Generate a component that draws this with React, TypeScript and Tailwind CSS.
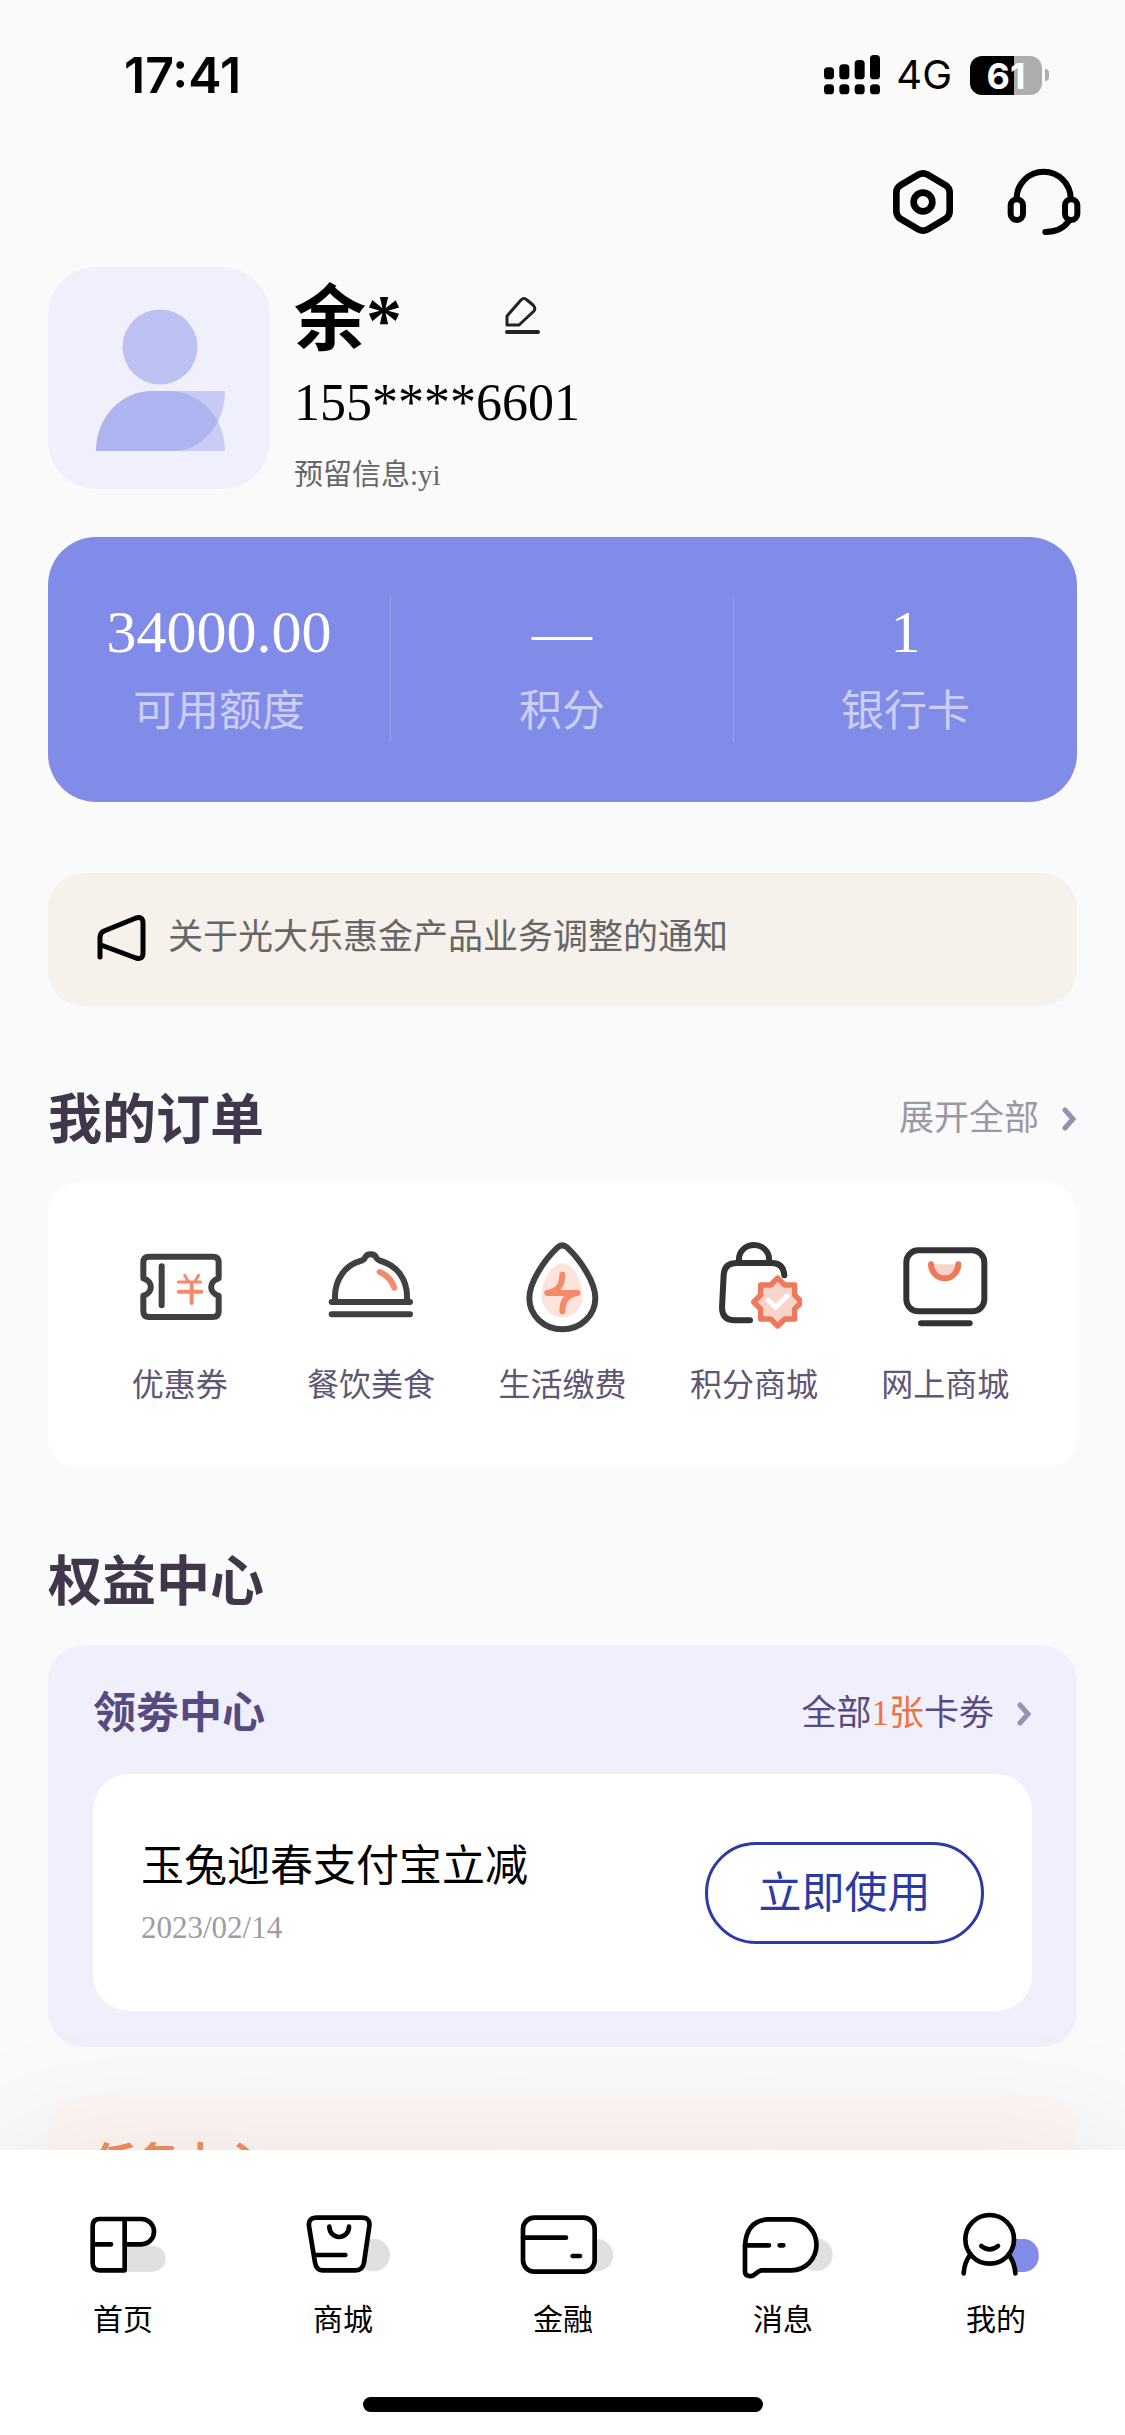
import type { ReactNode } from "react";

const INK = "#404040";
const CORAL = "#f58a6b";

const SignalIcon = () => (
	<svg className="w-14 h-10" viewBox="0 0 168 120" fill="#000">
		<rect x="0" y="37" width="30" height="36" rx="11" />
		<rect x="46" y="28" width="30" height="45" rx="11" />
		<rect x="92" y="15" width="30" height="58" rx="11" />
		<rect x="138" y="0" width="30" height="73" rx="11" />
		<rect x="0" y="88" width="30" height="30" rx="11" />
		<rect x="46" y="88" width="30" height="30" rx="11" />
		<rect x="92" y="88" width="30" height="30" rx="11" />
		<rect x="138" y="88" width="30" height="30" rx="11" />
	</svg>
);

const SettingsIcon = () => (
	<svg className="w-16 h-[68px]" viewBox="0 0 192 204" fill="none" stroke="#000" strokeWidth="20">
		<path d="M82 20Q96 12 110 20L163 51Q176 59 176 74V130Q176 145 163 153L110 184Q96 192 82 184L29 153Q16 145 16 130V74Q16 59 29 51Z" />
		<circle cx="96" cy="102" r="28" />
	</svg>
);

const HeadsetIcon = () => (
	<svg
		className="w-[76px] h-[68px]"
		viewBox="0 0 228 204"
		fill="none"
		stroke="#000"
		strokeWidth="18"
		strokeLinecap="round"
	>
		<rect x="14" y="94" width="37" height="62" rx="18" />
		<rect x="177" y="94" width="37" height="62" rx="18" />
		<path d="M32 92A81 81 0 0 1 194 92" />
		<path d="M188 160Q165 192 118 192" />
	</svg>
);

const EditIcon = () => (
	<svg
		className="w-[38px] h-10"
		viewBox="0 0 38 40"
		fill="none"
		stroke="#222"
		strokeWidth="3"
		strokeLinecap="round"
		strokeLinejoin="round"
	>
		<path d="M3 29V20L17 4Q20 1 23 4L29 9Q32 12 30 15L15 29Z" />
		<path d="M3 36H34" strokeWidth="4" />
	</svg>
);

const AvatarIcon = () => (
	<svg className="w-[222px] h-[222px] rounded-[48px] bg-[#f0f0fc]" viewBox="0 0 222 222">
		<circle cx="112" cy="80" r="37.500" fill="#bcc1f1" />
		<path d="M48 184A56 60 0 0 1 104 124H121A56 60 0 0 1 177 184Z" fill="#818be8" fillOpacity="0.35" />
		<path
			d="M48 184A56 60 0 0 1 104 124H177A52 60 0 0 1 125 184Z"
			fill="#818be8"
			fillOpacity="0.38"
		/>
	</svg>
);

const HornIcon = () => (
	<svg
		className="w-[52px] h-12"
		viewBox="0 0 52 48"
		fill="none"
		stroke="#000"
		strokeWidth="5"
		strokeLinecap="round"
		strokeLinejoin="round"
	>
		<path d="M4 43V23Q4 19 8 17L40 4Q47 2 47 9V39Q47 46 40 44L5 31" />
	</svg>
);

const Chevron = () => (
	<svg
		className="w-4 h-6"
		viewBox="0 0 16 24"
		fill="none"
		stroke="#9990b4"
		strokeWidth="5"
		strokeLinecap="round"
	>
		<path d="M4 3L12 12L4 21" />
	</svg>
);

const OrderIcon = ({ children }: { children: ReactNode }) => (
	<svg
		className="w-24 h-24"
		viewBox="0 0 288 288"
		fill="none"
		strokeWidth="18"
		strokeLinecap="round"
		strokeLinejoin="round"
	>
		{children}
	</svg>
);

const TabIcon = ({ children, width = 300 }: { children: ReactNode; width?: number }) => (
	<svg
		className="h-[70px]"
		viewBox={`0 0 ${width} 210`}
		fill="none"
		stroke="#000"
		strokeWidth="14"
		strokeLinecap="round"
		strokeLinejoin="round"
	>
		{children}
	</svg>
);

const stats = [
	{ value: "34000.00", label: "可用额度" },
	{ value: "—", label: "积分" },
	{ value: "1", label: "银行卡" },
];

const orders = [
	{
		label: "优惠券",
		icon: (
			<OrderIcon>
				<path
					d="M34 118V70Q34 53 51 53H243Q260 53 260 70V118C230 126 230 162 260 170V217Q260 234 243 234H51Q34 234 34 217V170C64 162 64 126 34 118Z"
					stroke={INK}
				/>
				<path d="M89 82V199" stroke={INK} />
				<path d="M158 109L169 127M200 109L189 127M139 129H206" stroke={CORAL} strokeWidth="9" />
				<path d="M140 158H208M179 132V192" stroke={CORAL} strokeWidth="12" />
			</OrderIcon>
		),
	},
	{
		label: "餐饮美食",
		icon: (
			<OrderIcon>
				<path
					d="M36 186V172C36 120 68 78 112 66Q124 63 126 56C132 42 154 42 160 56Q163 63 174 66C222 80 252 120 252 172V186"
					stroke={INK}
				/>
				<path d="M26 189H261M26 226H261" stroke={INK} />
				<path d="M170 99Q202 112 214 146" stroke={CORAL} />
			</OrderIcon>
		),
	},
	{
		label: "生活缴费",
		icon: (
			<OrderIcon>
				<path
					d="M145 73C180 73 206 130 206 172A61.500 63 0 0 1 83 172C83 130 110 73 145 73Z"
					fill="#fce3dc"
				/>
				<path
					d="M130 26Q145 12 160 26C198 62 244 128 244 178A99 93 0 0 1 46 178C46 128 92 62 130 26Z"
					stroke={INK}
				/>
				<path d="M145 107C145 140 132 155 100 162H190C158 166 145 185 145 217" stroke={CORAL} />
			</OrderIcon>
		),
	},
	{
		label: "积分商城",
		icon: (
			<OrderIcon>
				<g stroke="#333">
					<path d="M99 68V60A45 42 0 0 1 189 60V68" />
					<path d="M235 109Q232 72 198 72H92Q55 72 53 108L48 205Q48 244 86 244H132" />
				</g>
				<path
					d="M215 117L236 138H266V168L287 189L266 210V240H236L215 261L194 240H164V210L143 189L164 168V138H194Z"
					fill="#fad4ca"
					stroke="#f0785a"
					strokeWidth="16"
				/>
				<path d="M187 184L209 205L243 171" stroke="#fff" strokeWidth="15" />
			</OrderIcon>
		),
	},
	{
		label: "网上商城",
		icon: (
			<OrderIcon>
				<rect x="28" y="34" width="234" height="183" rx="36" stroke="#333" />
				<path d="M72 253H218" stroke="#333" />
				<path d="M102 76A41 42 0 0 0 184 76" fill="#fad4ca" stroke="#f0785a" />
			</OrderIcon>
		),
	},
];

const tabs = [
	{
		label: "首页",
		icon: (
			<TabIcon>
				<path d="M155 107H239A39 39 0 0 1 239 185H155Z" fill="#e0e0e0" stroke="none" />
				<path d="M155 181H80Q59 181 59 160V48Q59 27 80 27H205A38 38 0 0 1 205 103H155M155 27V181M59 103H114" />
			</TabIcon>
		),
	},
	{
		label: "商城",
		icon: (
			<TabIcon>
				<circle cx="242" cy="135" r="49" fill="#e0e0e0" stroke="none" />
				<path
					d="M72 23H206Q232 23 229 48L213 158Q209 181 188 181H88Q70 181 66 158L48 48Q45 23 72 23Z"
					fill="#fff"
				/>
				<path d="M109 50A29.500 31 0 0 0 168 50M64 135H157" />
			</TabIcon>
		),
	},
	{
		label: "金融",
		icon: (
			<TabIcon>
				<path d="M240 87H258A49 49 0 0 1 258 184H240Z" fill="#e0e0e0" stroke="none" />
				<rect x="30" y="23" width="215" height="162" rx="34" fill="#fff" />
				<path d="M30 83H159M179 138H201" />
			</TabIcon>
		),
	},
	{
		label: "消息",
		icon: (
			<TabIcon>
				<circle cx="250" cy="134" r="49" fill="#e0e0e0" stroke="none" />
				<path
					d="M36 107V186Q36 196 48 198Q58 200 64 194Q78 182 86 181H175A75 76 0 0 0 175 28H105Q40 32 36 107Z"
					fill="#fff"
				/>
				<path d="M36 106H108M140 106H151" />
			</TabIcon>
		),
	},
	{
		label: "我的",
		icon: (
			<TabIcon width={258}>
				<path
					d="M160 87H211A46 46 0 0 1 257 133V140A46 46 0 0 1 211 186H187Q182 150 160 130Z"
					fill="#818be8"
					stroke="none"
				/>
				<circle cx="110" cy="88" r="73" fill="#fff" />
				<path d="M85 108Q110 128 135 108M32 190Q34 156 52 134M187 190Q185 156 167 134" />
			</TabIcon>
		),
	},
];

const StatusBar = () => {
	return (
		<div className="h-[150px] flex flex-row items-center justify-between pl-[124px] pr-[76px] font-[Inter,sans-serif]">
			<span className="text-[50px] leading-[52px] font-semibold">17:41</span>
			<div className="flex flex-row items-center">
				<SignalIcon />
				<span className="ml-4 text-[40px] leading-[44px]">4G</span>
				<div className="ml-[18px] w-[72px] h-[39px] rounded-[12px] bg-[linear-gradient(90deg,#000_61%,#adadad_61%)] text-white text-[36px] leading-[40px] font-bold text-center">
					61
				</div>
				<div className="ml-[3px] w-1 h-3 rounded-r-full bg-[#adadad]" />
			</div>
		</div>
	);
};

const Profile = () => {
	return (
		<div className="mt-[31px] flex flex-row gap-x-6">
			<AvatarIcon />
			<div>
				<div className="flex flex-row items-center gap-x-[102px]">
					<h1 className="text-[72px] leading-[106px] font-bold">余*</h1>
					<button type="button" aria-label="编辑" className="pb-2">
						<EditIcon />
					</button>
				</div>
				<p className="text-[52px] leading-[60px]">155****6601</p>
				<p className="mt-7 text-[29px] leading-7 text-[#666]">预留信息:yi</p>
			</div>
		</div>
	);
};

const Panel = ({
	title,
	className,
	more,
	children,
}: {
	title: string;
	className: string;
	more?: ReactNode;
	children?: ReactNode;
}) => {
	return (
		<div className={`rounded-[36px] px-[45px] pt-[39px] pb-9 ${className}`}>
			<div className="flex flex-row items-center justify-between h-[60px]">
				<h3 className="text-[43px] leading-[60px] font-bold">{title}</h3>
				{more}
			</div>
			{children}
		</div>
	);
};

const TabBar = () => {
	return (
		<nav className="relative bg-white shadow-[0_0_150px_rgba(0,0,0,0.08)] pt-[60px] pb-[23px]">
			<div className="flex flex-row justify-between pl-[73px] pr-[86px]">
				{tabs.map((tab) => (
					<a key={tab.label} href="#" className="flex flex-col items-center gap-y-[22px]">
						{tab.icon}
						<span className="text-[30px] leading-9">{tab.label}</span>
					</a>
				))}
			</div>
			<div className="mx-auto mt-[59px] w-[400px] h-[15px] rounded-full bg-black" />
		</nav>
	);
};

const App = () => {
	return (
		<div className="h-screen flex flex-col bg-[#fafafa] text-black font-['Liberation_Serif','Noto_Sans_CJK_SC',serif]">
			<main className="flex-1 min-h-0 overflow-y-auto [scrollbar-width:none]">
				<StatusBar />
				<div className="mt-[18px] flex flex-row justify-end gap-x-[51px] pr-[43px]">
					<button type="button" aria-label="设置">
						<SettingsIcon />
					</button>
					<button type="button" aria-label="客服">
						<HeadsetIcon />
					</button>
				</div>

				<div className="px-12">
					<Profile />

					<div className="mt-12 h-[265px] rounded-[48px] bg-[#818be8] grid grid-cols-3 items-center">
						{stats.map((stat) => (
							<div
								key={stat.label}
								className="h-[145px] flex flex-col items-center border-r border-white/20 last:border-r-0"
							>
								<p className="text-[60px] leading-[70px] text-white">{stat.value}</p>
								<p className="mt-[15px] text-[43px] leading-[60px] text-white/60">{stat.label}</p>
							</div>
						))}
					</div>

					<a
						href="#"
						className="mt-[71px] h-[133px] px-12 pb-1 rounded-[36px] bg-[#f6f1eb] flex flex-row items-center gap-x-5 text-[#666]"
					>
						<HornIcon />
						<span className="text-[35px] leading-[48px]">关于光大乐惠金产品业务调整的通知</span>
					</a>

					<section className="pt-[71px]">
						<div className="mb-[22px] flex flex-row items-center justify-between">
							<h2 className="pt-1 text-[54px] leading-[80px] font-bold text-[#41374d]">我的订单</h2>
							<a href="#" className="flex flex-row items-center gap-x-[22px] text-[#9a98a5]">
								<span className="text-[35px] leading-[48px]">展开全部</span>
								<Chevron />
							</a>
						</div>
						<div className="rounded-[30px] bg-white px-9 pt-14 pb-[63px] grid grid-cols-5">
							{orders.map((order) => (
								<a key={order.label} href="#" className="flex flex-col items-center gap-y-[30px]">
									{order.icon}
									<span className="text-[32px] leading-10 text-[#5f5673]">{order.label}</span>
								</a>
							))}
						</div>
					</section>

					<section className="pt-[71px]">
						<h2 className="mb-[22px] pt-1 text-[54px] leading-[80px] font-bold text-[#41374d]">
							权益中心
						</h2>
						<Panel
							title="领劵中心"
							className="bg-[#f0f0fc] text-[#574a80]"
							more={
								<a href="#" className="flex flex-row items-center gap-x-[22px]">
									<span className="text-[35px] leading-[48px]">
										全部<span className="text-[#f0733c]">1张</span>卡劵
									</span>
									<Chevron />
								</a>
							}
						>
							<div className="mt-[30px] h-[237px] rounded-[36px] bg-white px-12 flex flex-row items-center justify-between">
								<div className="pt-[3px]">
									<p className="text-[43px] leading-[68px] text-black">玉兔迎春支付宝立减</p>
									<p className="text-[31px] leading-[54px] text-[#9c9ca6]">2023/02/14</p>
								</div>
								<button
									type="button"
									className="w-[279px] h-[102px] pt-[2px] rounded-full border-3 border-[#2b3aa5] text-[43px] leading-[60px] text-[#2b3aa5]"
								>
									立即使用
								</button>
							</div>
						</Panel>
						<Panel title="任务中心" className="mt-[49px] bg-[#fdf6f3] text-[#f0905f]" />
					</section>
				</div>
			</main>
			<TabBar />
		</div>
	);
};

export default App;
